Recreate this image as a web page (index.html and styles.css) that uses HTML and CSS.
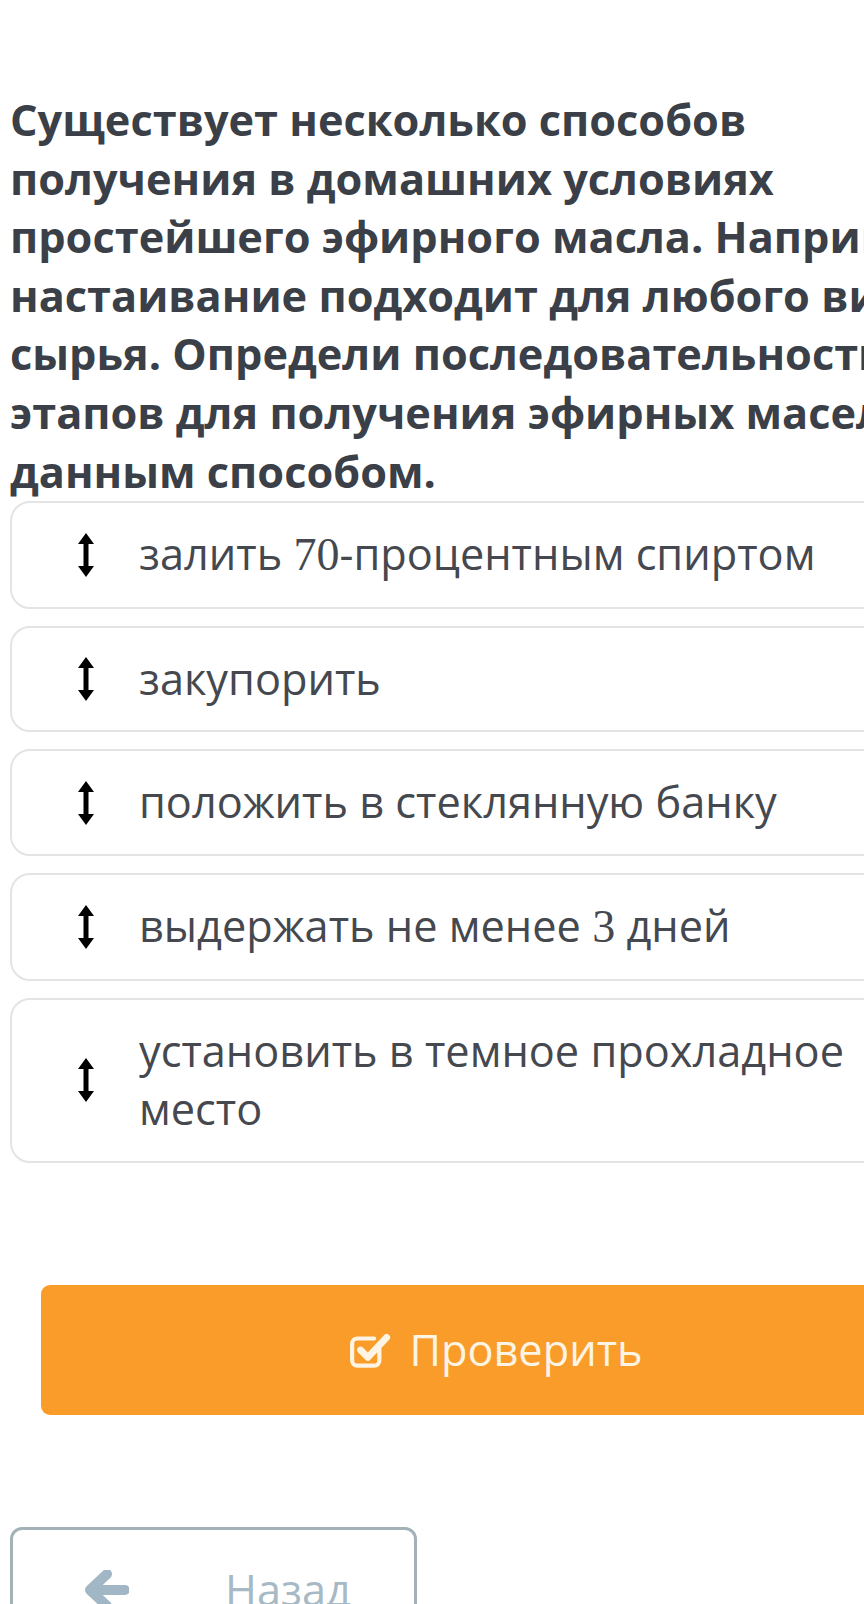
FILE: index.html
```html
<!doctype html>
<html lang="ru">
  <head>
    <meta charset="UTF-8" />
    <meta name="viewport" content="width=device-width, initial-scale=1.0" />
    <title>Порядок действий</title>
    <link rel="stylesheet" href="styles.css">
  </head>
  <body>
    <div class="page">
      <h1 class="question">
        Существует несколько способов<br />
        получения в домашних условиях<br />
        простейшего эфирного масла. Например,<br />
        настаивание подходит для любого вида<br />
        сырья. Определи последовательность<br />
        этапов для получения эфирных масел<br />
        данным способом.
      </h1>

      <div class="options">
        <div class="option">
          <svg class="drag" viewBox="0 0 16 44"><path d="M8 0 L16 11 H10.5 V33 H16 L8 44 L0 33 H5.5 V11 H0 Z" /></svg>
          <span class="label">залить <span class="num">70</span>-процентным спиртом</span>
        </div>
        <div class="option">
          <svg class="drag" viewBox="0 0 16 44"><path d="M8 0 L16 11 H10.5 V33 H16 L8 44 L0 33 H5.5 V11 H0 Z" /></svg>
          <span class="label">закупорить</span>
        </div>
        <div class="option">
          <svg class="drag" viewBox="0 0 16 44"><path d="M8 0 L16 11 H10.5 V33 H16 L8 44 L0 33 H5.5 V11 H0 Z" /></svg>
          <span class="label">положить в стеклянную банку</span>
        </div>
        <div class="option">
          <svg class="drag" viewBox="0 0 16 44"><path d="M8 0 L16 11 H10.5 V33 H16 L8 44 L0 33 H5.5 V11 H0 Z" /></svg>
          <span class="label">выдержать не менее <span class="num">3</span> дней</span>
        </div>
        <div class="option">
          <svg class="drag" viewBox="0 0 16 44"><path d="M8 0 L16 11 H10.5 V33 H16 L8 44 L0 33 H5.5 V11 H0 Z" /></svg>
          <span class="label">установить в темное прохладное место</span>
        </div>
      </div>

      <button class="check-btn">
        <svg class="check-icon" viewBox="0 0 42 38">
          <path d="M29 18 V29 a5 5 0 0 1 -5 5 H8 a5 5 0 0 1 -5 -5 V13 a5 5 0 0 1 5 -5 H24" fill="none" stroke="currentColor" stroke-width="4" stroke-linecap="round" />
          <path d="M11 19 L18 26 L36 7" fill="none" stroke="currentColor" stroke-width="6.5" stroke-linecap="round" stroke-linejoin="round" />
        </svg>
        Проверить
      </button>

      <button class="back-btn">
        <svg class="back-icon" viewBox="0 0 44 40">
          <path d="M22 4 L5 20 L22 36 M6 20 H40" fill="none" stroke="currentColor" stroke-width="10" stroke-linecap="round" stroke-linejoin="round" />
        </svg>
        <span>Назад</span>
      </button>
    </div>
  </body>
</html>
```

FILE: styles.css
```css
* {
  margin: 0;
  padding: 0;
  box-sizing: border-box;
}

body {
  font-family: "Open Sans", "Noto Sans", sans-serif;
  background: white;
  overflow: hidden;
  height: 1604px;
}

.page {
  width: 960px;
  padding: 91px 0 0 10px;
}

.question {
  color: #3b3f47;
  font-size: 43.3px;
  font-weight: 700;
  line-height: 58.6px;
  white-space: nowrap;
}

.options {
  display: flex;
  flex-direction: column;
  gap: 17px;
}

.option {
  display: flex;
  align-items: center;
  border: 2px solid #e2e4e5;
  border-radius: 20px;
  padding: 22px 40px 22px 66px;
  background: white;
  color: #45484e;
  font-size: 43.3px;
  line-height: 58.6px;
}

.drag {
  width: 16px;
  height: 44px;
  flex-shrink: 0;
  fill: #000;
  margin-right: 45px;
}

.label {
  max-width: 720px;
}

.num {
  font-family: "Liberation Serif", serif;
  font-size: 46px;
}

.check-btn {
  display: flex;
  align-items: center;
  justify-content: center;
  gap: 16px;
  width: 910px;
  height: 130px;
  margin: 122px 0 0 31px;
  border: none;
  border-radius: 9px;
  background: #f99c2a;
  color: #fdf4e4;
  font-family: "Open Sans", sans-serif;
  font-size: 43.3px;
}

.check-icon {
  width: 44px;
  height: 40px;
}

.back-btn {
  display: flex;
  align-items: center;
  width: 407px;
  height: 120px;
  margin-top: 112px;
  padding: 6px 0 0 72px;
  border: 3px solid #a2b2b6;
  border-radius: 12px;
  background: white;
  color: #a6b9c4;
  font-family: "Open Sans", sans-serif;
  font-size: 43.3px;
}

.back-icon {
  width: 44px;
  height: 40px;
  margin-right: 96px;
  color: #a2b7c5;
}
```
